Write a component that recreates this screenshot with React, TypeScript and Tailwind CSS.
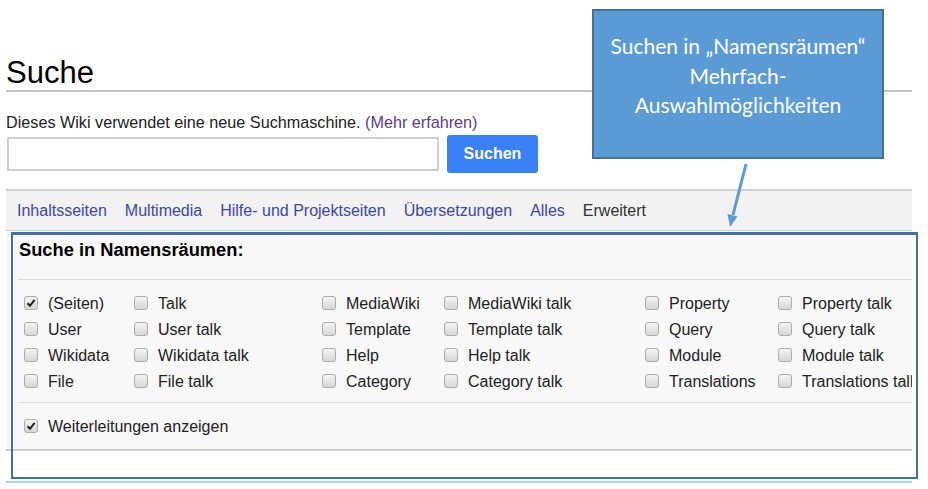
import React from "react";

const namespaces: [string, boolean][][] = [
  [["(Seiten)", true], ["Talk", false], ["MediaWiki", false], ["MediaWiki talk", false], ["Property", false], ["Property talk", false]],
  [["User", false], ["User talk", false], ["Template", false], ["Template talk", false], ["Query", false], ["Query talk", false]],
  [["Wikidata", false], ["Wikidata talk", false], ["Help", false], ["Help talk", false], ["Module", false], ["Module talk", false]],
  [["File", false], ["File talk", false], ["Category", false], ["Category talk", false], ["Translations", false], ["Translations talk", false]],
];

const tabs = ["Inhaltsseiten", "Multimedia", "Hilfe- und Projektseiten", "Übersetzungen", "Alles"];

function Checkbox({ checked }: { checked: boolean }) {
  return (
    <span className="flex h-[14px] w-[14px] shrink-0 items-center justify-center rounded-[3px] border border-[#acacac] bg-linear-to-b from-[#f4f4f4] to-[#d6d6d6]">
      {checked && (
        <svg width="10" height="10" viewBox="0 0 10 10">
          <path d="M1.5 5.2 L4 7.8 L8.6 1.8" fill="none" stroke="#222" strokeWidth="2" />
        </svg>
      )}
    </span>
  );
}

function Option({ label, checked }: { label: string; checked: boolean }) {
  return (
    <div className="flex h-[26px] items-center gap-[10px] whitespace-nowrap">
      <Checkbox checked={checked} />
      <span className="pt-[1px] text-[16px] text-[#222]">{label}</span>
    </div>
  );
}

export default function App() {
  return (
    <div className="relative h-[489px] w-[928px] overflow-hidden bg-white font-['Liberation_Sans',Arial,sans-serif]">
      <div className="w-[912px] pl-[6px] pt-[55px]">
        <h1 className="h-[35px] text-[31px] leading-[36px] text-black">Suche</h1>
        <div className="h-[2px] bg-[#c4c4c4]" />

        <p className="mt-[20px] text-[16.2px] leading-[20px] text-[#222]">
          Dieses Wiki verwendet eine neue Suchmaschine.{" "}
          <a className="text-[#5a3d8c]">(Mehr erfahren)</a>
        </p>

        <div className="mt-[3px] flex h-[38px] items-center gap-[8px]">
          <input className="ml-[1px] h-[34px] w-[432px] border-2 border-[#cfcfcf] bg-white outline-none" />
          <button className="h-[38px] w-[91px] rounded-[3px] bg-[#3a80f6] text-[16px] font-bold text-white">
            Suchen
          </button>
        </div>

        <div className="mt-[16px] flex h-[42px] items-center gap-[18px] border-t-2 border-b border-[#d2d2d2] bg-[#f2f2f2] pl-[11px] text-[16px]">
          {tabs.map((t) => (
            <a key={t} className="text-[#3a48a6]">
              {t}
            </a>
          ))}
          <span className="text-[#333]">Erweitert</span>
        </div>

        <div className="overflow-hidden border-b-2 border-[#cccccc] bg-[#f8f8f8] pl-[12px] pt-[8px]">
          <h2 className="ml-[1px] text-[18.3px] font-bold leading-[22px] text-black">Suche in Namensräumen:</h2>
          <div className="mt-[18px] border-t border-[#dedede] pb-[8px] pl-[6px] pt-[10px]">
            <div className="grid grid-cols-[110px_188px_122px_201px_133px_1fr]">
              {namespaces.flat().map(([label, checked]) => (
                <Option key={label} label={label} checked={checked} />
              ))}
            </div>
          </div>
          <div className="border-t border-[#dedede] pb-[10px] pl-[6px] pt-[10px]">
            <Option label="Weiterleitungen anzeigen" checked />
          </div>
        </div>

        <div className="mt-[30px] h-[2px] bg-[#a9d7fa]" />
      </div>

      {/* highlight frame over the namespace box */}
      <div className="pointer-events-none absolute left-[11px] top-[232px] h-[247px] w-[907px] border-2 border-t-[3px] border-[#41719c]" />

      {/* callout */}
      <div className="absolute left-[592px] top-[9px] h-[150px] w-[292px] border-2 border-[#41719c] bg-[#5b9bd5] pt-[20px] text-center font-[Lato,sans-serif] text-[21px] leading-[29.5px] text-white">
        Suchen in „Namensräumen“
        <br />
        Mehrfach-
        <br />
        Auswahlmöglichkeiten
      </div>
      <svg className="absolute left-[720px] top-[160px]" width="35" height="70" viewBox="0 0 35 70">
        <line x1="26" y1="4" x2="13" y2="55" stroke="#5b9bd5" strokeWidth="3" />
        <polygon points="10,67 17.5,56.5 7.5,54" fill="#5b9bd5" />
      </svg>
    </div>
  );
}
